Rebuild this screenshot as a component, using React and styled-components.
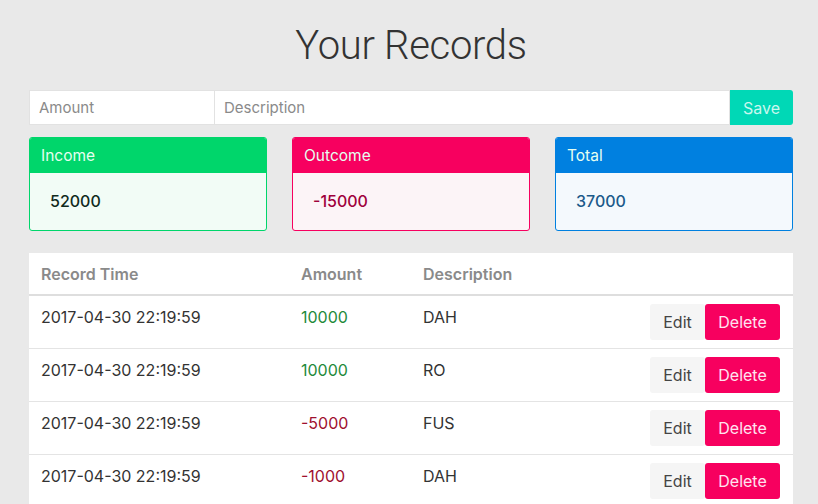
import React from "react";
import styled, { createGlobalStyle } from "styled-components";

const Global = createGlobalStyle`
  html, body { margin: 0; padding: 0; background: #e9e9e9; }
  body { font-family: "Inter", "Liberation Sans", sans-serif; color: #333; }
  * { box-sizing: border-box; }
`;

const Page = styled.div`
  width: 764px;
  margin: 0 0 0 29px;
  padding-top: 21px;
`;

const Title = styled.h1`
  margin: 0 0 19px;
  text-align: center;
  font-family: "Roboto", "Liberation Sans", sans-serif;
  font-weight: 300;
  font-size: 40px;
  line-height: 50px;
  color: #333;
  letter-spacing: -0.3px;
`;

const Form = styled.form`
  display: flex;
  height: 35px;
  margin-bottom: 12px;
`;

const Input = styled.input`
  width: ${(p) => p.$w || "auto"};
  flex: ${(p) => (p.$grow ? 1 : "none")};
  height: 35px;
  border: 1px solid #e2e2e2;
  border-left-width: ${(p) => (p.$first ? "1px" : "0")};
  background: #fff;
  padding: 0 9px;
  font-family: "Inter", "Liberation Sans", sans-serif;
  font-size: 15px;
  outline: none;
  &::placeholder { color: #8a8a8a; }
`;

const SaveButton = styled.button`
  width: 63px;
  height: 35px;
  border: none;
  border-radius: 0 3px 3px 0;
  background: #00d8b6;
  color: #c9f7ee;
  font-family: "Inter", "Liberation Sans", sans-serif;
  font-size: 16px;
`;

const Cards = styled.div`
  display: grid;
  grid-template-columns: 238px 238px 238px;
  justify-content: space-between;
  margin-bottom: 22px;
`;

const Card = styled.div`
  height: 94px;
  border: 1px solid ${(p) => p.$color};
  border-radius: 3px;
  background: ${(p) => p.$bg};
  overflow: hidden;
`;

const CardHeader = styled.div`
  height: 35px;
  background: ${(p) => p.$color};
  color: #e6fff0;
  font-size: 15.5px;
  padding: 0 11px;
  display: flex;
  align-items: center;
`;

const CardValue = styled.div`
  padding: 18px 20px;
  font-size: 16px;
  font-weight: 500;
  color: ${(p) => p.$text};
`;

const Table = styled.table`
  width: 100%;
  border-collapse: collapse;
  background: #fff;
`;

const Th = styled.th`
  text-align: left;
  height: 42px;
  padding: 0 12px;
  font-size: 16px;
  font-weight: 600;
  color: #8a8a8a;
  border-bottom: 2px solid #dedede;
  width: ${(p) => p.$w || "auto"};
`;

const Td = styled.td`
  vertical-align: top;
  padding: 11px 12px 0;
  height: 53px;
  font-size: 16px;
  color: ${(p) => p.$color || "#333"};
  border-top: 1px solid #e4e4e4;
`;

const ActionCell = styled.td`
  vertical-align: top;
  padding: 8px 13px 0 0;
  height: 53px;
  border-top: 1px solid #e4e4e4;
  text-align: right;
`;

const Actions = styled.div`
  display: inline-flex;
`;

const Btn = styled.button`
  height: 36px;
  border: none;
  border-radius: 3px;
  font-family: "Inter", "Liberation Sans", sans-serif;
  font-size: 16px;
  padding: 0;
  width: ${(p) => p.$w};
  background: ${(p) => (p.$danger ? "#f7005f" : "#f5f5f5")};
  color: ${(p) => (p.$danger ? "#ffe3ef" : "#444")};
`;

const records = [
  { amount: 10000, desc: "DAH" },
  { amount: 10000, desc: "RO" },
  { amount: -5000, desc: "FUS" },
  { amount: -1000, desc: "DAH" },
];

export default function App() {
  return (
    <>
      <Global />
      <Page>
        <Title>Your Records</Title>
        <Form onSubmit={(e) => e.preventDefault()}>
          <Input $first $w="186px" placeholder="Amount" />
          <Input $grow placeholder="Description" />
          <SaveButton type="submit">Save</SaveButton>
        </Form>
        <Cards>
          <Card $color="#00d66b" $bg="#f2fcf6">
            <CardHeader $color="#00d66b">Income</CardHeader>
            <CardValue $text="#102a1c">52000</CardValue>
          </Card>
          <Card $color="#f7005f" $bg="#fcf4f7">
            <CardHeader $color="#f7005f">Outcome</CardHeader>
            <CardValue $text="#a0003c">-15000</CardValue>
          </Card>
          <Card $color="#0080e0" $bg="#f4f9fd">
            <CardHeader $color="#0080e0">Total</CardHeader>
            <CardValue $text="#1b5a8a">37000</CardValue>
          </Card>
        </Cards>
        <Table>
          <thead>
            <tr>
              <Th $w="260px">Record Time</Th>
              <Th $w="122px">Amount</Th>
              <Th>Description</Th>
              <Th />
            </tr>
          </thead>
          <tbody>
            {records.map((r, i) => (
              <tr key={i}>
                <Td>2017-04-30 22:19:59</Td>
                <Td $color={r.amount > 0 ? "#1f8a3a" : "#a0102f"}>{r.amount}</Td>
                <Td>{r.desc}</Td>
                <ActionCell>
                  <Actions>
                    <Btn $w="55px">Edit</Btn>
                    <Btn $danger $w="75px">Delete</Btn>
                  </Actions>
                </ActionCell>
              </tr>
            ))}
          </tbody>
        </Table>
      </Page>
    </>
  );
}
